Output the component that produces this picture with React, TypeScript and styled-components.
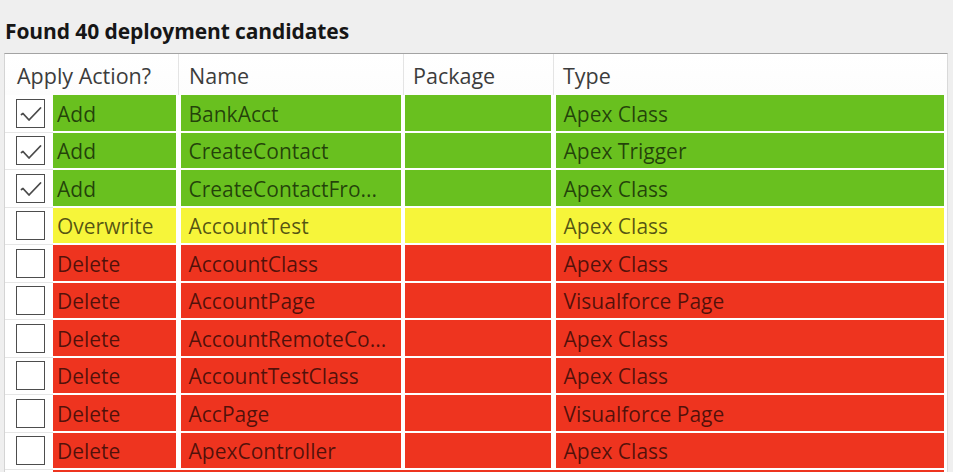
import React from 'react';
import styled, { createGlobalStyle } from 'styled-components';

const GlobalStyle = createGlobalStyle`
  html, body {
    margin: 0;
    padding: 0;
    background: #efefef;
    overflow: hidden;
  }
  body {
    font-family: 'Open Sans', 'Noto Sans', sans-serif;
  }
`;

type Action = 'Add' | 'Overwrite' | 'Delete';

interface ICandidate {
  checked: boolean;
  action: Action;
  name: string;
  pkg: string;
  type: string;
}

const actionColors: Record<Action, string> = {
  Add: '#69c01f',
  Overwrite: '#f6f53a',
  Delete: '#ee341f',
};

const candidates: ICandidate[] = [
  { checked: true, action: 'Add', name: 'BankAcct', pkg: '', type: 'Apex Class' },
  { checked: true, action: 'Add', name: 'CreateContact', pkg: '', type: 'Apex Trigger' },
  { checked: true, action: 'Add', name: 'CreateContactFro...', pkg: '', type: 'Apex Class' },
  { checked: false, action: 'Overwrite', name: 'AccountTest', pkg: '', type: 'Apex Class' },
  { checked: false, action: 'Delete', name: 'AccountClass', pkg: '', type: 'Apex Class' },
  { checked: false, action: 'Delete', name: 'AccountPage', pkg: '', type: 'Visualforce Page' },
  { checked: false, action: 'Delete', name: 'AccountRemoteCo...', pkg: '', type: 'Apex Class' },
  { checked: false, action: 'Delete', name: 'AccountTestClass', pkg: '', type: 'Apex Class' },
  { checked: false, action: 'Delete', name: 'AccPage', pkg: '', type: 'Visualforce Page' },
  { checked: false, action: 'Delete', name: 'ApexController', pkg: '', type: 'Apex Class' },
];

const Page = styled.div({
  display: 'flex',
  flexDirection: 'column',
  height: '472px',
  width: '953px',
});

const Title = styled.div({
  height: '53px',
  boxSizing: 'border-box',
  padding: '17px 0 0 5px',
  fontSize: '21px',
  lineHeight: '28px',
  fontWeight: 700,
  color: '#161616',
  letterSpacing: '-0.1px',
});

const Table = styled.div({
  marginLeft: '4px',
  width: '944px',
  flex: 1,
  background: '#ffffff',
  borderTop: '1px solid #a3a3a3',
  borderLeft: '1px solid #d4d4d4',
  borderRight: '1px solid #d9d9d9',
  boxSizing: 'border-box',
  overflow: 'hidden',
});

const HeaderRow = styled.div({
  display: 'grid',
  gridTemplateColumns: '173px 225px 150px 1fr',
  height: '40.5px',
  background: 'linear-gradient(#ffffff, #fdfdfd)',
});

const HeaderCell = styled.div<{ $first?: boolean; $pad: number }>((props) => ({
  display: 'flex',
  alignItems: 'center',
  paddingLeft: `${props.$pad}px`,
  paddingTop: '3px',
  borderLeft: props.$first ? 'none' : '1px solid #e4e4e4',
  fontSize: '21.5px',
  color: '#3c3c3c',
  whiteSpace: 'nowrap',
}));

const Rows = styled.div({
  display: 'flex',
  flexDirection: 'column',
  paddingTop: '0.5px',
});

const Row = styled.div({
  display: 'flex',
  height: '37.5px',
  flex: 'none',
});

// trailing row that is only partly in view at the bottom edge
const StubRow = styled.div({
  display: 'flex',
  height: '37.5px',
  flex: 'none',
  paddingLeft: '48px',
  paddingRight: '3px',
});

const Stub = styled.div<{ $bg: string }>((props) => ({
  flex: 1,
  background: props.$bg,
}));

const CheckCell = styled.div({
  width: '48px',
  flex: 'none',
  boxSizing: 'border-box',
  borderBottom: '1px solid #e6e6e6',
  display: 'flex',
  alignItems: 'flex-start',
  paddingTop: '3.5px',
  paddingLeft: '11px',
});

const CheckBox = styled.div({
  width: '29px',
  height: '29px',
  boxSizing: 'border-box',
  border: '1.5px solid #4d4d4d',
  background: '#ffffff',
  display: 'flex',
  alignItems: 'center',
  justifyContent: 'center',
});

const Cells = styled.div({
  flex: 1,
  display: 'grid',
  gridTemplateColumns: '123px 220px 146px 1fr',
  columnGap: '4.5px',
  paddingRight: '3px',
  height: '35.5px',
});

const Cell = styled.div<{ $bg: string; $pad: number }>((props) => ({
  background: props.$bg,
  display: 'flex',
  alignItems: 'center',
  paddingLeft: `${props.$pad}px`,
  paddingTop: '2px',
  fontSize: '21px',
  color: 'rgba(0, 0, 0, 0.66)',
  whiteSpace: 'nowrap',
  overflow: 'hidden',
}));

function CheckMark() {
  return (
    <svg width="26" height="26" viewBox="0 0 26 26">
      <path
        d="M3.5 14.5 L5 13.5 L11 20 L22.5 8"
        fill="none"
        stroke="#4a4a4a"
        strokeWidth="1.8"
        strokeLinejoin="round"
        strokeLinecap="round"
      />
    </svg>
  );
}

function CandidateRow({ item }: { item: ICandidate }) {
  const bg = actionColors[item.action];
  return (
    <Row>
      <CheckCell>
        <CheckBox>{item.checked && <CheckMark />}</CheckBox>
      </CheckCell>
      <Cells>
        <Cell $bg={bg} $pad={4}>
          {item.action}
        </Cell>
        <Cell $bg={bg} $pad={8}>
          {item.name}
        </Cell>
        <Cell $bg={bg} $pad={8}>
          {item.pkg}
        </Cell>
        <Cell $bg={bg} $pad={8}>
          {item.type}
        </Cell>
      </Cells>
    </Row>
  );
}

export default function App() {
  return (
    <Page>
      <GlobalStyle />
      <Title>Found 40 deployment candidates</Title>
      <Table>
        <HeaderRow>
          <HeaderCell $first $pad={12}>
            Apply Action?
          </HeaderCell>
          <HeaderCell $pad={10}>Name</HeaderCell>
          <HeaderCell $pad={9}>Package</HeaderCell>
          <HeaderCell $pad={9}>Type</HeaderCell>
        </HeaderRow>
        <Rows>
          {candidates.map((item) => (
            <CandidateRow key={item.name} item={item} />
          ))}
          <StubRow>
            <Stub $bg={actionColors.Delete} />
          </StubRow>
        </Rows>
      </Table>
    </Page>
  );
}
